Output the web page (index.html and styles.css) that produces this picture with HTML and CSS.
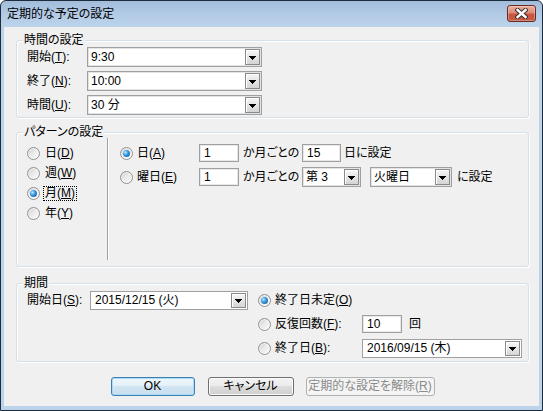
FILE: index.html
```html
<!DOCTYPE html>
<html lang="ja">
<head>
<meta charset="utf-8">
<title>定期的な予定の設定</title>
<link rel="stylesheet" href="styles.css">
</head>
<body>
<div class="window">
  <div class="titlebar">
    <span class="title">定期的な予定の設定</span>
    <span class="close">
      <svg width="13" height="11" viewBox="0 0 13 11">
        <path d="M2.5 2 L10.5 9 M10.5 2 L2.5 9" stroke="#3a3030" stroke-width="4.4" stroke-linecap="square"/>
        <path d="M2.5 2 L10.5 9 M10.5 2 L2.5 9" stroke="#ffffff" stroke-width="2.4" stroke-linecap="square"/>
      </svg>
    </span>
  </div>
  <div class="client">
    <fieldset class="group">
      <legend>時間の設定</legend>
      <div class="time-body">
        <div class="row"><span class="lbl-time">開始(<u>T</u>):</span><div class="combo w175"><span class="val">9:30</span><span class="dd"><svg width="7" height="4"><rect x="0" y="0" width="7" height="1"/><rect x="1" y="1" width="5" height="1"/><rect x="2" y="2" width="3" height="1"/><rect x="3" y="3" width="1" height="1"/></svg></span></div></div>
        <div class="row"><span class="lbl-time">終了(<u>N</u>):</span><div class="combo w175"><span class="val">10:00</span><span class="dd"><svg width="7" height="4"><rect x="0" y="0" width="7" height="1"/><rect x="1" y="1" width="5" height="1"/><rect x="2" y="2" width="3" height="1"/><rect x="3" y="3" width="1" height="1"/></svg></span></div></div>
        <div class="row"><span class="lbl-time">時間(<u>U</u>):</span><div class="combo w175"><span class="val">30 分</span><span class="dd"><svg width="7" height="4"><rect x="0" y="0" width="7" height="1"/><rect x="1" y="1" width="5" height="1"/><rect x="2" y="2" width="3" height="1"/><rect x="3" y="3" width="1" height="1"/></svg></span></div></div>
      </div>
    </fieldset>

    <fieldset class="group g-pattern">
      <legend>パターンの設定</legend>
      <div class="pat-body">
        <div class="pat-left">
          <div class="prow"><span class="radio"></span><span class="rlbl">日(<u>D</u>)</span></div>
          <div class="prow"><span class="radio"></span><span class="rlbl">週(<u>W</u>)</span></div>
          <div class="prow"><span class="radio on"></span><span class="rlbl focus">月(<u>M</u>)</span></div>
          <div class="prow"><span class="radio"></span><span class="rlbl">年(<u>Y</u>)</span></div>
        </div>
        <div class="vdiv"></div>
        <div class="pat-right">
          <div class="row">
            <span class="radio on"></span><span class="lbl-a">日(<u>A</u>)</span>
            <span class="edit w40">1</span><span class="txt-k">か月ごとの</span>
            <span class="edit w39">15</span><span class="txt-after">日に設定</span>
          </div>
          <div class="row">
            <span class="radio"></span><span class="lbl-a">曜日(<u>E</u>)</span>
            <span class="edit w40">1</span><span class="txt-k">か月ごとの</span>
            <div class="combo w59"><span class="val">第 3</span><span class="dd"><svg width="7" height="4"><rect x="0" y="0" width="7" height="1"/><rect x="1" y="1" width="5" height="1"/><rect x="2" y="2" width="3" height="1"/><rect x="3" y="3" width="1" height="1"/></svg></span></div>
            <div class="combo w82 ml9"><span class="val">火曜日</span><span class="dd"><svg width="7" height="4"><rect x="0" y="0" width="7" height="1"/><rect x="1" y="1" width="5" height="1"/><rect x="2" y="2" width="3" height="1"/><rect x="3" y="3" width="1" height="1"/></svg></span></div>
            <span class="txt-end">に設定</span>
          </div>
        </div>
      </div>
    </fieldset>

    <fieldset class="group g-period">
      <legend>期間</legend>
      <div class="per-body">
        <div class="row">
          <span class="lbl-s">開始日(<u>S</u>):</span>
          <div class="combo date w158"><span class="val">2015/12/15 (火)</span><span class="dd"><svg width="7" height="4"><rect x="0" y="0" width="7" height="1"/><rect x="1" y="1" width="5" height="1"/><rect x="2" y="2" width="3" height="1"/><rect x="3" y="3" width="1" height="1"/></svg></span></div>
        </div>
        <div class="per-right">
          <div class="row"><span class="radio on"></span><span class="lbl-o">終了日未定(<u>O</u>)</span></div>
          <div class="row"><span class="radio"></span><span class="lbl-o">反復回数(<u>F</u>):</span><span class="edit w40">10</span><span class="txt-kai">回</span></div>
          <div class="row"><span class="radio"></span><span class="lbl-o">終了日(<u>B</u>):</span><div class="combo date w160"><span class="val">2016/09/15 (木)</span><span class="dd"><svg width="7" height="4"><rect x="0" y="0" width="7" height="1"/><rect x="1" y="1" width="5" height="1"/><rect x="2" y="2" width="3" height="1"/><rect x="3" y="3" width="1" height="1"/></svg></span></div></div>
        </div>
      </div>
    </fieldset>

    <div class="buttons">
      <button class="btn btn-ok">OK</button>
      <button class="btn btn-cancel">キャンセル</button>
      <button class="btn btn-clear" disabled>定期的な設定を解除(<u>R</u>)</button>
    </div>
  </div>
</div>
</body>
</html>
```

FILE: styles.css
```css
* { box-sizing: border-box; }
html, body { margin: 0; padding: 0; }
body {
  width: 543px;
  height: 411px;
  overflow: hidden;
  background: #ffffff;
  font-family: "Liberation Sans", "Noto Sans CJK JP", sans-serif;
  font-size: 12px;
  line-height: 14px;
  color: #000;
  font-feature-settings: "palt";
}
u { text-decoration: underline; text-underline-offset: 1px; }

.window {
  width: 543px;
  height: 411px;
  border: 1px solid #1d2b3b;
  border-radius: 6px 6px 0 0;
  padding: 0 3px 4px;
  display: flex;
  flex-direction: column;
  background: linear-gradient(#a2bddb 0, #b3cbe6 14px, #bcd3ec 26px, #bcd3ec 100%);
}
.titlebar {
  height: 26px;
  flex: none;
  display: flex;
  justify-content: space-between;
  align-items: flex-start;
}
.title { padding: 6px 0 0 3px; line-height: 14px; }
.close {
  width: 29px;
  height: 17px;
  margin: 4px 3px 0 0;
  border: 1px solid #6a2a20;
  border-radius: 3px;
  background: linear-gradient(#e9ae9f 0, #dc8b77 45%, #c9553f 55%, #c65841 100%);
  box-shadow: inset 0 0 0 1px rgba(255,255,255,0.3);
  display: flex;
  align-items: center;
  justify-content: center;
}
.close svg { display: block; }

.client {
  flex: 1;
  background: #f0f0f0;
  padding: 7px 10px 0 12px;
  display: flex;
  flex-direction: column;
}

.group {
  margin: 0;
  padding: 0;
  min-width: 0;
  border: 1px solid #d5dfe5;
  border-radius: 3px;
  box-shadow: inset 1px 1px 0 #fff, 1px 1px 0 #fff;
}
.group legend {
  margin-left: 6px;
  padding: 0 1px;
  line-height: 12px;
  background: #f0f0f0;
}
.g-pattern { margin-top: 8px; }
.g-period { margin-top: 10px; }

.row { display: flex; align-items: center; height: 20px; white-space: nowrap; }

.time-body {
  display: flex;
  flex-direction: column;
  gap: 4px;
  padding: 1px 0 2px 10px;
}
.lbl-time { width: 60px; }

.combo {
  height: 20px;
  border: 1px solid #a0a0a0;
  background: #fff;
  padding: 1px;
  display: flex;
  align-items: stretch;
  box-shadow: inset 0 0 0 1px #e3e3e3;
  flex: none;
}
.combo .val { flex: 1; padding-left: 2px; line-height: 16px; white-space: nowrap; overflow: hidden; }
.combo.date { height: 19px; box-shadow: none; }
.combo.date .val { line-height: 15px; padding-left: 3px; }
.dd {
  width: 15px;
  border: 1px solid #8a8a8a;
  background: linear-gradient(#f6f6f6, #e6e6e6 50%, #d4d4d4);
  box-shadow: inset 1px 1px 0 #fff;
  display: flex;
  align-items: flex-end;
  justify-content: center;
  padding-bottom: 4px;
}
.dd svg { display: block; fill: #000; }

.w175 { width: 175px; }
.w158 { width: 158px; }
.w160 { width: 160px; }
.w59 { width: 59px; }
.w82 { width: 82px; }
.w40 { width: 40px; }
.w39 { width: 39px; }
.ml9 { margin-left: 9px; }

.edit {
  height: 18px;
  border: 1px solid #a0a0a0;
  background: #fff;
  padding-left: 4px;
  line-height: 16px;
  box-shadow: inset 0 0 0 1px #e8e8e8;
  flex: none;
}

.radio {
  width: 13px;
  height: 13px;
  flex: none;
  border-radius: 50%;
  border: 1px solid #8f9090;
  background: linear-gradient(135deg, #cbcbcb 0, #e9e9e9 45%, #fbfbfb 100%);
  box-shadow: inset 0 0 0 1px rgba(255,255,255,0.6);
  display: flex;
  align-items: center;
  justify-content: center;
}
.radio.on::after {
  content: "";
  width: 7px;
  height: 7px;
  border-radius: 50%;
  background: radial-gradient(circle at 35% 35%, #b6ecff 0, #3b9ae0 40%, #0d4e93 100%);
}

.pat-body { display: flex; padding: 0 0 6px 10px; }
.pat-left { width: 80px; padding-top: 5px; display: flex; flex-direction: column; }
.prow { height: 20px; display: flex; align-items: center; }
.rlbl { margin-left: 4px; line-height: 13px; border: 1px solid transparent; padding: 0 1px; position: relative; left: -1px; }
.rlbl.focus { border: 1px dotted #000; }
.vdiv {
  width: 2px;
  height: 122px;
  border-left: 1px solid #a0a0a0;
  border-right: 1px solid #ffffff;
}
.pat-right { display: flex; flex-direction: column; gap: 4px; padding: 5px 0 0 11px; }
.lbl-a { margin-left: 4px; width: 62px; }
.txt-k { margin-left: 4px; width: 59px; }
.txt-after { margin-left: 3px; }
.txt-end { margin-left: 5px; }

.per-body { display: flex; padding: 1px 0 3px 10px; }
.lbl-s { width: 63px; }
.per-right { margin-left: 10px; display: flex; flex-direction: column; gap: 4px; }
.lbl-o { margin-left: 4px; width: 87px; }
.txt-kai { margin-left: 7px; }

.buttons { display: flex; justify-content: center; margin-top: 15px; }
.btn {
  height: 19px;
  padding: 0;
  font: inherit;
  line-height: 17px;
  color: #000;
  border: 1px solid #707070;
  border-radius: 3px;
  background: linear-gradient(#f2f2f2 0, #ebebeb 50%, #dddddd 50%, #cfcfcf 100%);
  box-shadow: inset 0 0 0 1px #fbfbfb;
}
.btn-ok {
  width: 84px;
  border-color: #3c7fb1;
  background: linear-gradient(#eef6fb 0, #e3eff8 50%, #d3e5f2 50%, #c8dded 100%);
  box-shadow: inset 0 0 0 1px #a9dcf6;
}
.btn-cancel { width: 86px; margin-left: 13px; }
.btn-clear {
  width: 129px;
  margin-left: 12px;
  color: #8a8a8a;
  border-color: #adb2b5;
  background: #f4f4f4;
  box-shadow: none;
}
```
